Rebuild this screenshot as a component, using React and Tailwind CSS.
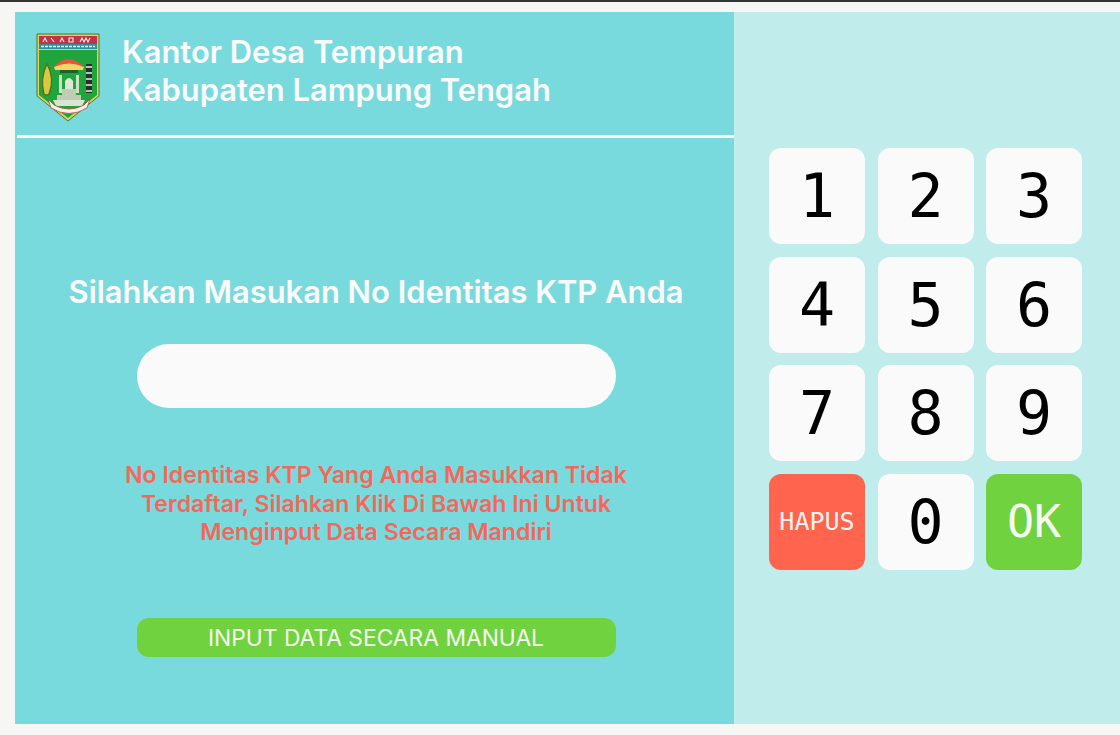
const keys = ['1', '2', '3', '4', '5', '6', '7', '8', '9', 'HAPUS', '0', 'OK']

function Logo() {
  return (
    <svg width="64" height="90" viewBox="0 0 64 90" className="shrink-0 mt-[21px]">
      <path d="M1 1H63V63L32 88L1 63Z" fill="#e6cf55" stroke="#3d7d3a" strokeWidth="1" />
      <path d="M3 17H61V62L32 85L3 62Z" fill="#1fa53c" />
      <rect x="3" y="3" width="58" height="8" fill="#c2334a" />
      <rect x="3" y="11" width="58" height="5" fill="#2f8f9c" />
      <path d="M7 9l2-4 2 4M15 5l3 4M24 9l2-4 2 4M33 5h4v4h-4zM44 9l2-4 2 4 2-4 2 4 2-4" fill="none" stroke="#f6e7e0" strokeWidth="1.1" />
      <path d="M5 13.5h54" stroke="#e3f3f2" strokeWidth="1.5" strokeDasharray="3 1" />
      {/* payung */}
      <path d="M18 34Q32 18 48 34Z" fill="#e8553c" />
      <path d="M18 34Q33 27 48 34L47 37H19Z" fill="#f2d766" />
      <path d="M24 37H42V40H24z" fill="#17622e" />
      {/* bangunan */}
      <path d="M29 48Q33 42 37 48V56H29Z" fill="#dfe8d8" />
      <rect x="23" y="42" width="3" height="18" fill="#cfe0c9" />
      <rect x="40" y="42" width="3" height="18" fill="#cfe0c9" />
      <path d="M26 56H40V62H45V68H21V62H26Z" fill="#bfcdb5" />
      <path d="M17 67H49L46 73H20Z" fill="#dbe3d2" />
      {/* pita */}
      <path d="M12 66L18 72Q33 80 48 72L54 66L51 75Q33 86 15 75Z" fill="#f1f1e8" stroke="#b9463c" strokeWidth="0.8" />
      {/* padi dan kapas */}
      <path d="M11 31Q4 45 8 61Q11 63 13 61Q19 45 11 31Z" fill="#d9c93f" stroke="#56691e" strokeWidth="1.2" />
      <path d="M53 31V60" stroke="#26302a" strokeWidth="6" />
      <path d="M50 34h6M50 40h6M50 46h6M50 52h6M50 58h6" stroke="#eef2ea" strokeWidth="1.6" />
    </svg>
  )
}

function Key({ label }) {
  if (label === 'HAPUS') {
    return (
      <button className="h-24 rounded-xl bg-[#fe644e] text-[#fbf3ee] text-[25px] font-['DejaVu_Sans_Mono',monospace] flex items-center justify-center">
        HAPUS
      </button>
    )
  }
  if (label === 'OK') {
    return (
      <button className="h-24 rounded-xl bg-[#6fd23e] text-[#f6fbef] text-[45px] font-['DejaVu_Sans_Mono',monospace] flex items-center justify-center">
        OK
      </button>
    )
  }
  return (
    <button className="h-24 rounded-xl bg-[#fafafa] text-black text-[60px] font-['DejaVu_Sans_Mono',monospace] flex items-center justify-center">
      {label}
    </button>
  )
}

export default function App() {
  return (
    <div className="w-[1120px] h-[735px] overflow-hidden bg-[#f6f6f4] border-t-[2px] border-[#333333] pt-[10px] pb-[11px] font-['Inter',sans-serif]">
      <div className="h-full flex pl-[15px]">
        {/* Left panel */}
        <div className="w-[719px] bg-[#79dade] flex flex-col">
          <div className="h-[126px] flex items-start gap-[23px] pl-[19px] ml-[2px] border-b-[3px] border-[#fafafa]">
            <Logo />
            <div className="mt-[21px] -ml-[1px] text-[#fafafa] text-[30.9px] leading-[38px] font-semibold">
              <div>Kantor Desa Tempuran</div>
              <div>Kabupaten Lampung Tengah</div>
            </div>
          </div>

          <div className="flex flex-col items-center pl-[3px]">
            <h1 className="mt-[135px] text-[#fafafa] text-[30.9px] leading-[38px] font-semibold whitespace-nowrap">
              Silahkan Masukan No Identitas KTP Anda
            </h1>
            <div className="mt-[33px] w-[479px] h-16 rounded-[32px] bg-[#fafafa]"></div>
            <p className="mt-[53px] w-[540px] text-center text-[#f4685a] text-[23.1px] leading-[28.5px] font-semibold">
              No Identitas KTP Yang Anda Masukkan Tidak Terdaftar, Silahkan Klik Di Bawah Ini Untuk Menginput Data Secara Mandiri
            </p>
            <button className="mt-[71px] w-[479px] h-[39px] pt-[2px] rounded-xl bg-[#6fd23e] text-[#f6fbef] text-[22.8px]">
              INPUT DATA SECARA MANUAL
            </button>
          </div>
        </div>

        {/* Keypad */}
        <div className="flex-1 bg-[#c0ecec] pt-[136px] pl-[35px] pr-[38px]">
          <div className="grid grid-cols-3 gap-x-[12.5px] gap-y-[12.5px]">
            {keys.map((k) => (
              <Key key={k} label={k} />
            ))}
          </div>
        </div>
      </div>
    </div>
  )
}
